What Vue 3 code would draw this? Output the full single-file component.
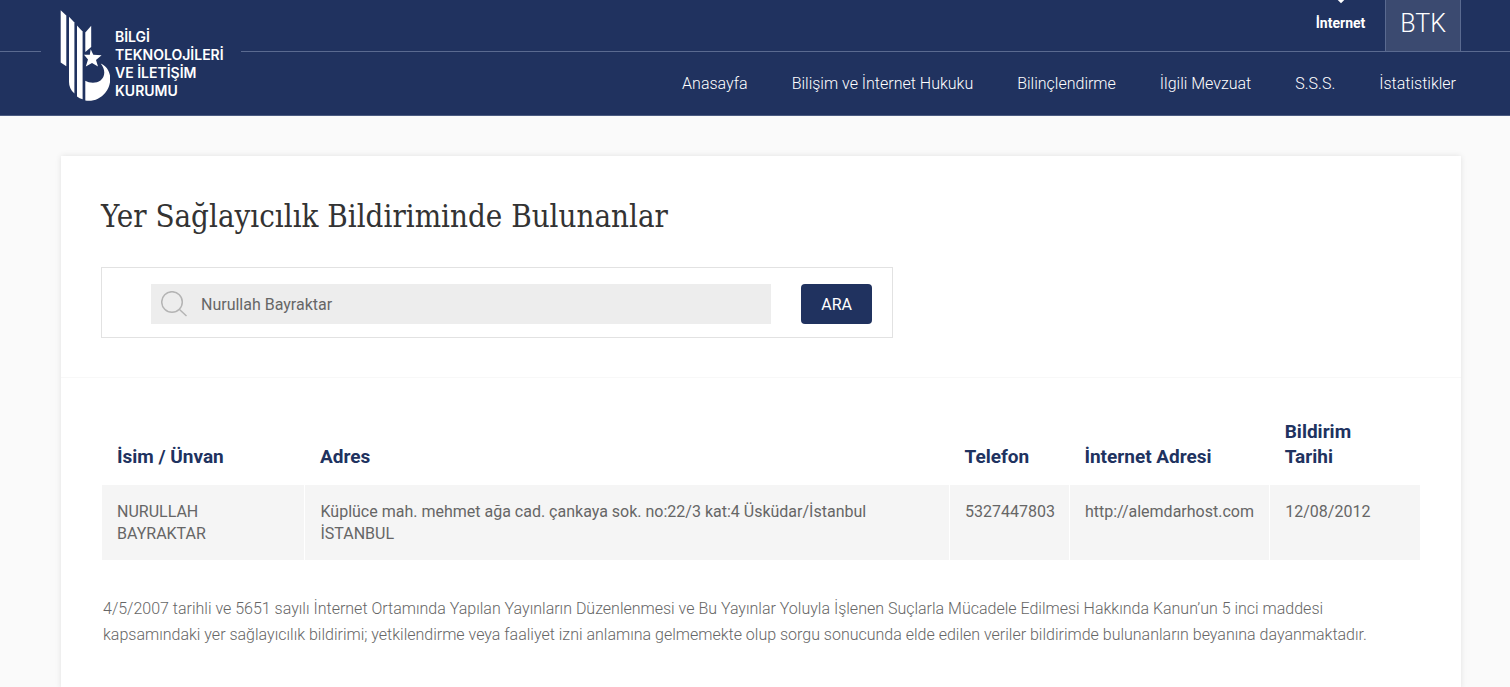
<script setup>
import { ref } from 'vue'

const query = ref('Nurullah Bayraktar')

const links = [
  'Anasayfa',
  'Bilişim ve İnternet Hukuku',
  'Bilinçlendirme',
  'İlgili Mevzuat',
  'S.S.S.',
  'İstatistikler'
]

const columns = [
  { key: 'name', label: 'İsim / Ünvan' },
  { key: 'address', label: 'Adres' },
  { key: 'phone', label: 'Telefon' },
  { key: 'site', label: 'İnternet Adresi' },
  { key: 'date', label: 'Bildirim Tarihi' }
]

const rows = [
  {
    name: 'NURULLAH BAYRAKTAR',
    address: 'Küplüce mah. mehmet ağa cad. çankaya sok. no:22/3 kat:4 Üsküdar/İstanbul\nİSTANBUL',
    phone: '5327447803',
    site: 'http://alemdarhost.com',
    date: '12/08/2012'
  }
]
</script>

<template>
  <div class="page">
    <header class="header">
      <span class="rule-start"></span>
      <a class="logo" href="#">
        <svg class="emblem" viewBox="60 10 50 92" aria-hidden="true">
          <path d="M60.7 10.2 66.3 15.6V66.2L60.7 62.5Z" />
          <path d="M69 16.8 74.4 22.6V93.5Q69 89 69 82Z" />
          <path d="M77 25.5 82.6 31.4V99.3Q79.6 98.5 77 96.5Z" />
          <path d="M85.3 32.4 91.2 25.8V47L85.3 52Z" />
          <path d="M90.7 49.3 93.3 54.7 101.6 55.3 96 60 98 66.6 92 63 85.8 66.4 88 59.6 84 54.7 89.8 54.7Z" />
          <path d="M100.7 63.4C112.5 68.5 112.5 84 105.5 92.5C100 99 94 101.5 85.3 100.6V80.8C89 83 96 83.8 100.5 80.5C105.5 76.5 105.5 69 100.7 63.4Z" />
        </svg>
        <span class="logo-text">BİLGİ<br>TEKNOLOJİLERİ<br>VE İLETİŞİM<br>KURUMU</span>
      </a>
      <div class="bars">
        <div class="top-bar">
          <a class="section" href="#">İnternet</a>
          <a class="btk" href="#">BTK</a>
        </div>
        <nav class="nav">
          <a v-for="link in links" :key="link" href="#">{{ link }}</a>
        </nav>
      </div>
    </header>

    <main class="card">
      <section class="intro">
        <h1>Yer Sağlayıcılık Bildiriminde Bulunanlar</h1>
        <form class="search" @submit.prevent>
          <label class="field">
            <svg viewBox="0 0 26 26" aria-hidden="true">
              <circle cx="11" cy="11" r="10.3" />
              <path d="M18.5 18.5 25.5 25" />
            </svg>
            <input v-model="query" type="text" aria-label="İsim / Ünvan">
          </label>
          <button type="submit">ARA</button>
        </form>
      </section>

      <section class="results">
        <table>
          <colgroup>
            <col v-for="c in columns" :key="c.key" :class="'col-' + c.key">
          </colgroup>
          <thead>
            <tr>
              <th v-for="c in columns" :key="c.key" scope="col">{{ c.label }}</th>
            </tr>
          </thead>
          <tbody>
            <tr v-for="r in rows" :key="r.phone">
              <td v-for="c in columns" :key="c.key">{{ r[c.key] }}</td>
            </tr>
          </tbody>
        </table>
        <p class="note">
          4/5/2007 tarihli ve 5651 sayılı İnternet Ortamında Yapılan Yayınların Düzenlenmesi ve Bu Yayınlar Yoluyla İşlenen Suçlarla Mücadele Edilmesi Hakkında Kanun’un 5 inci maddesi kapsamındaki yer sağlayıcılık bildirimi; yetkilendirme veya faaliyet izni anlamına gelmemekte olup sorgu sonucunda elde edilen veriler bildirimde bulunanların beyanına dayanmaktadır.
        </p>
      </section>
    </main>
  </div>
</template>

<style>
body {
  margin: 0;
  background: #fafafa;
}
</style>

<style scoped>
* {
  box-sizing: border-box;
}

.page {
  min-height: 100vh;
  display: flex;
  flex-direction: column;
  font-family: Roboto, "Liberation Sans", sans-serif;
  font-size: 16px;
  color: #666;
}

a {
  color: inherit;
  text-decoration: none;
}

.header {
  display: flex;
  flex: none;
  overflow: hidden;
  background: #20325f;
  border-bottom: 1px solid #4b5b81;
  color: #fff;
}

.rule-start {
  width: 41px;
  height: 52px;
  border-bottom: 1px solid #5a6a90;
}

.logo {
  width: 200px;
  padding: 10px 0 0 19px;
  display: flex;
  gap: 5px;
}

.emblem {
  width: 50px;
  height: 92px;
  fill: #fff;
}

.logo-text {
  margin-top: 18px;
  font: 600 14px/18px Inter, "Open Sans", sans-serif;
}

.bars {
  flex: 1;
}

.top-bar {
  height: 52px;
  padding-right: 49px;
  display: flex;
  justify-content: flex-end;
  border-bottom: 1px solid #5a6a90;
}

.section {
  position: relative;
  padding: 12px 20px 0;
  font-size: 14px;
  font-weight: 700;
  line-height: 22px;
}

.section::before {
  content: "";
  position: absolute;
  top: -4px;
  left: 50%;
  width: 6px;
  height: 6px;
  margin-left: -3px;
  background: #fff;
  transform: rotate(45deg);
}

.btk {
  padding: 0 14px;
  border: solid #5a6a90;
  border-width: 0 1px;
  background: #3b4a70;
  font-size: 25px;
  font-weight: 300;
  line-height: 48px;
}

.nav {
  height: 63px;
  padding-right: 54px;
  display: flex;
  align-items: center;
  justify-content: flex-end;
  gap: 44px;
  font-weight: 300;
}

.card {
  flex: 1;
  margin: 40px 49px 0 61px;
  background: #fff;
  box-shadow: 0 0 6px rgba(0, 0, 0, 0.1);
}

.intro {
  padding: 40px 40px 39px;
  border-bottom: 1px solid #f8f8f8;
}

h1 {
  margin: 0 0 31px;
  font: 400 31px/40px "Roboto Slab", "DejaVu Serif Condensed", "DejaVu Serif", serif;
  color: #333;
}

.search {
  width: 60%;
  padding: 16px 20px 13px 49px;
  display: flex;
  gap: 30px;
  border: 1px solid #e2e2e2;
}

.field {
  flex: 1;
  padding-left: 10px;
  display: flex;
  align-items: center;
  gap: 14px;
  background: #ededed;
}

.field svg {
  width: 26px;
  height: 26px;
  fill: none;
  stroke: #b4b4b4;
  stroke-width: 1.5;
}

.field input {
  flex: 1;
  height: 40px;
  padding: 0;
  border: 0;
  outline: 0;
  background: transparent;
  font: inherit;
  color: #666;
}

.search button {
  height: 40px;
  padding: 0 20px;
  border: 0;
  border-radius: 4px;
  background: #20325f;
  color: #fff;
  font: inherit;
}

.results {
  padding: 41px;
}

table {
  width: 100%;
  border-collapse: collapse;
  table-layout: fixed;
}

.col-name { width: 15.4%; }
.col-address { width: 48.9%; }
.col-phone { width: 9.1%; }
.col-site { width: 15.2%; }
.col-date { width: 11.4%; }

th {
  padding: 0 15px 16px;
  font-size: 19px;
  font-weight: 700;
  line-height: 25px;
  text-align: left;
  vertical-align: bottom;
  color: #20325f;
}

th:last-child {
  padding-right: 60px;
}

td {
  padding: 16px 15px 15px;
  background: #f5f5f5;
  line-height: 22px;
  vertical-align: top;
  white-space: pre-line;
}

td + td {
  border-left: 1px solid #fff;
}

.note {
  margin: 36px 1px 0;
  font-weight: 300;
  line-height: 26px;
}
</style>
